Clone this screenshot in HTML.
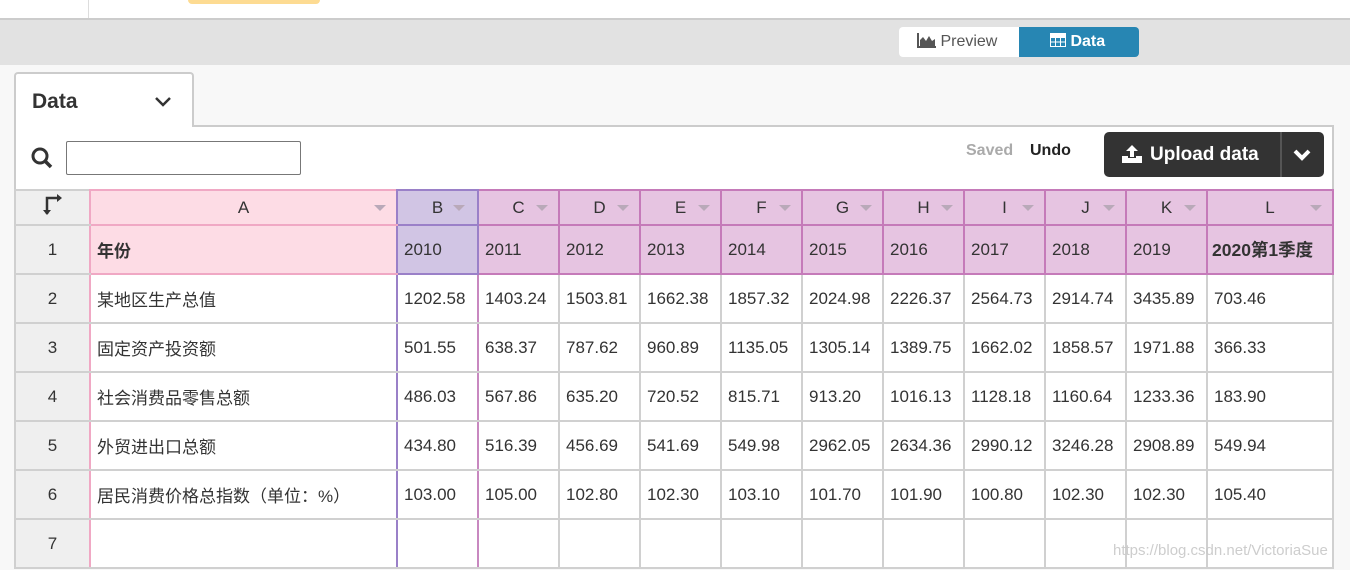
<!DOCTYPE html>
<html><head><meta charset="utf-8"><style>
*{box-sizing:border-box;margin:0;padding:0}
body{width:1350px;height:570px;overflow:hidden;background:#f8f8f8;font-family:"Liberation Sans","Noto Sans CJK SC",sans-serif;color:#333;position:relative}
.abs{position:absolute}
table{position:absolute;left:14px;top:189px;border-collapse:collapse;table-layout:fixed;font-size:17px}
td{border:2px solid #d0d0d0;height:49px;padding:0 6px;white-space:nowrap;overflow:hidden;background:#fff}
tr.h td{height:35px;text-align:center;position:relative}
td.rh{background:#efefef;text-align:center;color:#333;border-right-color:#f0a8c4}
td.a{border-left-color:#f0a8c4;border-right-color:#9a80c8}
tr.h td.a,tr.r1 td.a{background:#fddce5;border-color:#f0a8c4;border-right-color:#9a80c8}
td.b{border-left-color:#9a80c8;border-right-color:#c888c0}
tr.h td.b,tr.r1 td.b{background:#d1c5e4;border-color:#9a80c8}
tr.h td.c,tr.r1 td.c{background:#e6c4e1;border-color:#c57ab9}
.ar{position:absolute;right:10px;top:14px;width:0;height:0;border-left:6px solid transparent;border-right:6px solid transparent;border-top:6px solid #b9a9b9}
</style></head><body>
<div class="abs" style="left:0;top:0;width:1350px;height:18px;background:#fff"></div>
<div class="abs" style="left:88px;top:0;width:1px;height:18px;background:#ddd"></div>
<div class="abs" style="left:188px;top:0;width:132px;height:4px;background:#fddb92;border-radius:0 0 4px 4px"></div>
<div class="abs" style="left:0;top:18px;width:1350px;height:2px;background:#ccc"></div>
<div class="abs" style="left:0;top:20px;width:1350px;height:45px;background:#e2e2e2"></div>
<div class="abs" style="left:899px;top:27px;width:120px;height:30px;background:#fff;border-radius:4px 0 0 4px;font-size:16px;color:#555;line-height:30px;padding-left:18px">
<svg width="19" height="15" style="vertical-align:-2px" viewBox="0 0 19 15"><path d="M1 0V14H19" stroke="#555" stroke-width="2" fill="none"/><path d="M3 13V7L6 4L9 8L12 3L15 8L18 6V13Z" fill="#555"/></svg> Preview</div>
<div class="abs" style="left:1019px;top:27px;width:120px;height:30px;background:#2786b3;border-radius:0 4px 4px 0;font-size:16px;color:#fff;font-weight:bold;line-height:30px;padding-left:31px">
<svg width="16" height="14" style="vertical-align:-1px" viewBox="0 0 16 14"><rect x="0.5" y="0.5" width="15" height="13" fill="none" stroke="#fff"/><path d="M0 4.5H16M0 9H16M5.5 0V14M10.5 0V14" stroke="#fff"/><rect x="0" y="0" width="16" height="4" fill="#fff"/></svg> Data</div>
<div class="abs" style="left:14px;top:72px;width:180px;height:55px;background:#fff;border:2px solid #ccc;border-bottom:none;border-radius:4px 4px 0 0;font-size:21px;font-weight:bold;padding:16px 0 0 16px">Data
<svg class="abs" style="left:138px;top:22px" width="18" height="12" viewBox="0 0 18 12"><path d="M2 2L9 9L16 2" stroke="#333" stroke-width="2.5" fill="none"/></svg></div>
<div class="abs" style="left:14px;top:125px;width:1320px;height:66px;background:#fff;border:2px solid #ccc;border-bottom:none"></div>
<div class="abs" style="left:16px;top:125px;width:176px;height:3px;background:#fff"></div>
<svg class="abs" style="left:30px;top:146px" width="24" height="24" viewBox="0 0 24 24"><circle cx="10" cy="10" r="7" stroke="#333" stroke-width="3" fill="none"/><path d="M15 15L21 21" stroke="#333" stroke-width="3.5"/></svg>
<div class="abs" style="left:66px;top:141px;width:235px;height:34px;border:1px solid #777;border-radius:2px;background:#fff"></div>
<div class="abs" style="left:966px;top:142px;font-size:16px;font-weight:bold;color:#aaa">Saved</div>
<div class="abs" style="left:1030px;top:142px;font-size:16px;font-weight:bold;color:#222">Undo</div>
<div class="abs" style="left:1104px;top:132px;width:220px;height:45px;background:#333;border-radius:5px;color:#fff;font-size:19px;font-weight:bold;line-height:45px;padding-left:46px">Upload data</div>
<svg class="abs" style="left:1121px;top:144px" width="22" height="20" viewBox="0 0 22 20"><path d="M11 1L5 7H9V13H13V7H17Z" fill="#fff"/><path d="M1 12V19H21V12H15V14H7V12Z" fill="#fff"/></svg>
<div class="abs" style="left:1280px;top:132px;width:2px;height:45px;background:#555"></div>
<svg class="abs" style="left:1292px;top:148px" width="20" height="14" viewBox="0 0 20 14"><path d="M3 3L10 10L17 3" stroke="#fff" stroke-width="4" fill="none"/></svg>
<table>
<colgroup><col style="width:75px"><col style="width:307px"><col style="width:81px"><col style="width:81px"><col style="width:81px"><col style="width:81px"><col style="width:81px"><col style="width:81px"><col style="width:81px"><col style="width:81px"><col style="width:81px"><col style="width:81px"><col style="width:126px"></colgroup>
<tr class="h"><td class="rh"><svg width="20" height="22" viewBox="0 0 20 22"><path d="M4 20V4H15" stroke="#333" stroke-width="2.5" fill="none"/><path d="M0 16L4 21L8 16ZM14 0L19 4L14 8Z" fill="#333"/></svg></td><td class="a">A<i class="ar"></i></td><td class="b">B<i class="ar" style="right:12px"></i></td><td class="c">C<i class="ar"></i></td><td class="c">D<i class="ar"></i></td><td class="c">E<i class="ar"></i></td><td class="c">F<i class="ar"></i></td><td class="c">G<i class="ar"></i></td><td class="c">H<i class="ar"></i></td><td class="c">I<i class="ar"></i></td><td class="c">J<i class="ar"></i></td><td class="c">K<i class="ar"></i></td><td class="c">L<i class="ar"></i></td></tr>
<tr class="r1"><td class="rh">1</td><td class="a" style="font-weight:bold">年份</td><td class="b">2010</td><td class="c">2011</td><td class="c">2012</td><td class="c">2013</td><td class="c">2014</td><td class="c">2015</td><td class="c">2016</td><td class="c">2017</td><td class="c">2018</td><td class="c">2019</td><td class="c" style="font-weight:bold;padding:0 4px;font-size:17.5px">2020第1季度</td></tr>
<tr><td class="rh">2</td><td class="a">某地区生产总值</td><td class="b">1202.58</td><td>1403.24</td><td>1503.81</td><td>1662.38</td><td>1857.32</td><td>2024.98</td><td>2226.37</td><td>2564.73</td><td>2914.74</td><td>3435.89</td><td>703.46</td></tr>
<tr><td class="rh">3</td><td class="a">固定资产投资额</td><td class="b">501.55</td><td>638.37</td><td>787.62</td><td>960.89</td><td>1135.05</td><td>1305.14</td><td>1389.75</td><td>1662.02</td><td>1858.57</td><td>1971.88</td><td>366.33</td></tr>
<tr><td class="rh">4</td><td class="a">社会消费品零售总额</td><td class="b">486.03</td><td>567.86</td><td>635.20</td><td>720.52</td><td>815.71</td><td>913.20</td><td>1016.13</td><td>1128.18</td><td>1160.64</td><td>1233.36</td><td>183.90</td></tr>
<tr><td class="rh">5</td><td class="a">外贸进出口总额</td><td class="b">434.80</td><td>516.39</td><td>456.69</td><td>541.69</td><td>549.98</td><td>2962.05</td><td>2634.36</td><td>2990.12</td><td>3246.28</td><td>2908.89</td><td>549.94</td></tr>
<tr><td class="rh">6</td><td class="a">居民消费价格总指数（单位：%）</td><td class="b">103.00</td><td>105.00</td><td>102.80</td><td>102.30</td><td>103.10</td><td>101.70</td><td>101.90</td><td>100.80</td><td>102.30</td><td>102.30</td><td>105.40</td></tr>
<tr><td class="rh">7</td><td class="a"></td><td class="b"></td><td></td><td></td><td></td><td></td><td></td><td></td><td></td><td></td><td></td><td></td></tr>
</table>
<div class="abs" style="left:1113px;top:542px;font-size:15px;color:rgba(200,200,200,0.9)">https://blog.csdn.net/VictoriaSue</div>
</body></html>
